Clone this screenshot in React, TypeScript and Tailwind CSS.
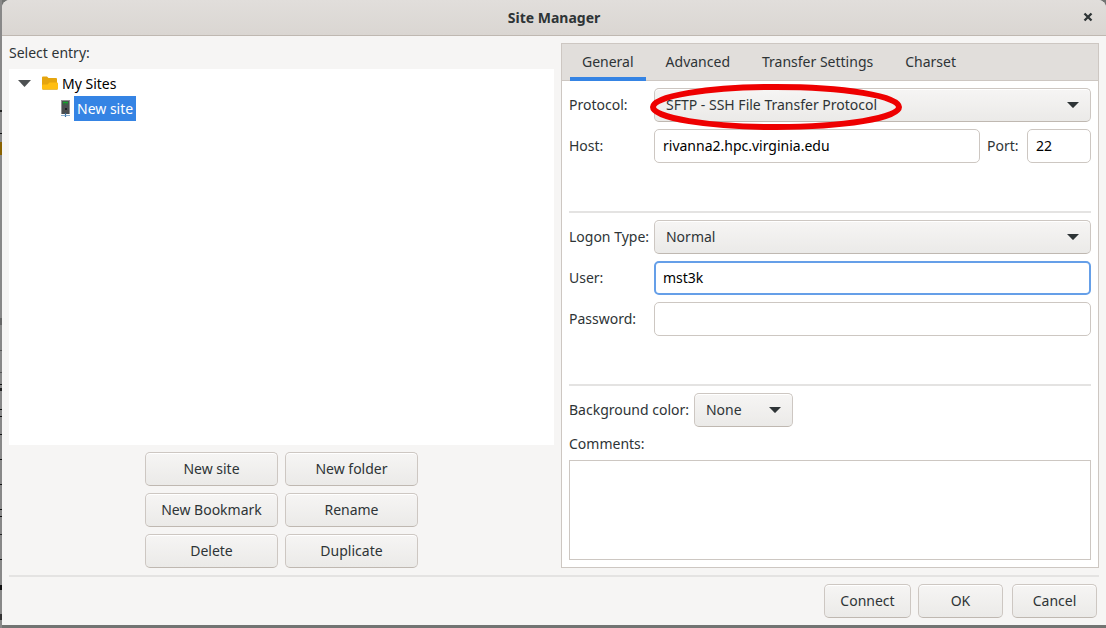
import { useState, type ReactNode } from "react";
import clsx from "clsx";

const raised =
  "h-[34px] rounded-[5px] border border-[#cdc7c2] border-b-[#bfb8b1] bg-linear-to-b from-[#f6f5f4] to-[#ebeae8] text-[#2e3436] shadow-[inset_0_1px_#fff]";
const fieldBase = "h-[34px] w-full min-w-0 rounded-[5px] bg-white pb-[2px] text-black outline-none";
const field = clsx(fieldBase, "border border-[#cdc7c2] px-2");
const focusedField = clsx(fieldBase, "border-2 border-[#659fe8] px-[7px]");
const row = "grid grid-cols-[78px_minmax(0,1fr)] items-center gap-[7px]";

function PushButton({ children, className }: { children: ReactNode; className?: string }) {
  return (
    <button type="button" className={clsx(raised, "whitespace-nowrap", className)}>
      {children}
    </button>
  );
}

function Picker({ id, options, children }: { id: string; options: string[]; children?: ReactNode }) {
  return (
    <div className="relative w-full">
      <select id={id} className={clsx(raised, "w-full appearance-none pr-8 pl-[11px] outline-none")}>
        {options.map((option) => (
          <option key={option}>{option}</option>
        ))}
      </select>
      <svg
        className="pointer-events-none absolute top-[14px] right-3 h-[6px] w-3 fill-[#2e3436]"
        viewBox="0 0 12 6"
        aria-hidden="true"
      >
        <path d="M0 0h12L6.6 5.6Q6 6.2 5.4 5.6Z" />
      </svg>
      {children}
    </div>
  );
}

function Divider({ className }: { className?: string }) {
  return <hr className={clsx("h-[2px] shrink-0 border-0 bg-[#e4e3e2]", className)} />;
}

function FolderIcon() {
  return (
    <svg className="h-[15px] w-4 shrink-0" viewBox="0 0 16 15" aria-hidden="true">
      <path d="M0 1.500q0-1 1-1h4L6.500 2H14q1 0 1 1v9H0z" fill="#e5a50f" />
      <path d="M0 12.500V9.500q0-1 1-1h4.500l2-2H15q1 0 1 1v5q0 1-1 1H1q-1 0-1-1z" fill="#ffbe12" />
      <path d="M.5 13.500h15" stroke="#d9a420" strokeWidth="0.6" />
    </svg>
  );
}

function ServerIcon() {
  return (
    <svg className="h-[17px] w-[10px] shrink-0" viewBox="0 0 10 17" aria-hidden="true">
      <rect x="1" y="0" width="9" height="14" fill="#8f9191" />
      <rect x="2" y="1" width="7" height="13" fill="#4b4e50" />
      <path d="M3 2.500h5" stroke="#16a52c" strokeWidth="1.400" />
      <path d="M3 4h1.500M6 4h1.500" stroke="#178a2a" strokeWidth="1" />
      <rect x="5" y="8" width="2" height="2" fill="#1d2022" />
      <path d="M5.500 13v4" stroke="#3d6f9e" strokeWidth="1.200" />
      <path d="M1 15.500h9" stroke="#6b9cc8" strokeWidth="0.8" />
    </svg>
  );
}

const tabs = ["General", "Advanced", "Transfer Settings", "Charset"];
const actions = ["New site", "New folder", "New Bookmark", "Rename", "Delete", "Duplicate"];
const marks = [
  [110, 2, "#222"], [133, 1, "#111"], [142, 13, "#8a6200"], [318, 7, "#666"], [350, 1, "#555"],
  [372, 1, "#555"], [384, 1, "#111"], [388, 3, "#222"], [409, 1, "#111"], [416, 1, "#111"],
  [434, 1, "#111"], [459, 1, "#111"], [484, 1, "#111"], [509, 1, "#111"], [516, 1, "#111"],
  [534, 1, "#222"], [559, 1, "#111"], [585, 5, "#111"], [614, 6, "#333"],
] as const;

export default function App() {
  const [active, setActive] = useState("General");

  return (
    <div className="relative flex min-h-screen bg-[#727472] pb-[3px] pl-[2px] font-['Noto_Sans',sans-serif] text-[14px] leading-5 text-[#2e3436]">
      <svg className="absolute top-0 left-0 h-full w-[2px]" viewBox="0 0 2 628" preserveAspectRatio="none" aria-hidden="true">
        <rect width="2" height="628" fill="#888" />
        {marks.map(([y, h, fill]) => (
          <rect key={y} y={y} width="2" height={h} fill={fill} />
        ))}
      </svg>

      <main className="flex min-w-0 flex-1 flex-col overflow-hidden rounded-t-[8px] bg-[#f6f5f4]">
        <header className="relative flex h-9 shrink-0 items-center justify-center border-b border-[#bfb8b1] bg-linear-to-b from-[#e1dedb] to-[#dad6d2]">
          <h1 className="font-bold">Site Manager</h1>
          <button type="button" aria-label="Close" className="absolute inset-y-0 right-3 flex items-center">
            <svg className="h-3 w-3" viewBox="0 0 12 12" aria-hidden="true">
              <path d="M2.500 1.500l7 7M9.500 1.500l-7 7" stroke="#2e3436" strokeWidth="2.300" />
            </svg>
          </button>
        </header>

        <div className="flex flex-1 gap-[7px] p-[7px]">
          <section className="flex min-w-0 flex-[546] flex-col">
            <h2>Select entry:</h2>
            <ul className="mt-[6px] flex-1 bg-white pt-[2px] text-black">
              <li>
                <div className="flex h-[25px] items-center pl-[9px]">
                  <svg className="h-[7px] w-[13px] fill-[#4d5052]" viewBox="0 0 13 7" aria-hidden="true">
                    <path d="M0 0h13L6.500 7z" />
                  </svg>
                  <span className="flex items-center gap-1 pl-[11px]">
                    <FolderIcon />
                    My Sites
                  </span>
                </div>
                <ul>
                  <li className="flex h-[25px] items-center gap-1 pl-[51px]">
                    <ServerIcon />
                    <span className="bg-[#3584e4] px-[3px] leading-[25px] text-white">New site</span>
                  </li>
                </ul>
              </li>
            </ul>
            <div className="mt-[7px] grid grid-cols-[133px_133px] justify-center gap-[7px]">
              {actions.map((action) => (
                <PushButton key={action}>{action}</PushButton>
              ))}
            </div>
          </section>

          <section className="flex min-w-0 flex-[537] flex-col border border-[#cdc7c2] bg-white">
            <div role="tablist" className="flex h-[37px] gap-2 border-b border-[#cdc7c2] bg-[#e1dedb] pl-2">
              {tabs.map((tab) => (
                <button
                  key={tab}
                  type="button"
                  role="tab"
                  aria-selected={tab === active}
                  onClick={() => setActive(tab)}
                  className={clsx(
                    "-mb-px h-[37px] border-b-4 px-3 pt-[3px]",
                    tab === active ? "border-[#3584e4]" : "border-transparent",
                  )}
                >
                  {tab}
                </button>
              ))}
            </div>

            <form className="flex flex-1 flex-col p-[7px]" onSubmit={(event) => event.preventDefault()}>
              <div className="flex flex-col gap-[7px]">
                <div className={row}>
                  <label htmlFor="protocol">Protocol:</label>
                  <Picker id="protocol" options={["SFTP - SSH File Transfer Protocol"]}>
                    <svg className="pointer-events-none absolute -top-1 -left-1 h-[46px] w-[252px]" viewBox="0 0 252 46" aria-hidden="true">
                      <ellipse cx="126" cy="23" rx="123" ry="20" fill="none" stroke="#ee0000" strokeWidth="6" />
                    </svg>
                  </Picker>
                </div>
                <div className={row}>
                  <label htmlFor="host">Host:</label>
                  <div className="flex items-center gap-[7px]">
                    <input id="host" className={field} defaultValue="rivanna2.hpc.virginia.edu" />
                    <label htmlFor="port" className="w-[33px] shrink-0">Port:</label>
                    <div className="w-16 shrink-0">
                      <input id="port" className={field} defaultValue="22" />
                    </div>
                  </div>
                </div>
              </div>

              <Divider className="mt-12 mb-[7px]" />

              <div className="flex flex-col gap-[7px]">
                <div className={row}>
                  <label htmlFor="logon" className="whitespace-nowrap">Logon Type:</label>
                  <Picker id="logon" options={["Normal"]} />
                </div>
                <div className={row}>
                  <label htmlFor="user">User:</label>
                  <input id="user" className={focusedField} defaultValue="mst3k" />
                </div>
                <div className={row}>
                  <label htmlFor="password">Password:</label>
                  <input id="password" type="password" className={field} />
                </div>
              </div>

              <Divider className="mt-12 mb-[7px]" />

              <div className="flex items-center gap-[7px]">
                <label htmlFor="color" className="w-[118px] whitespace-nowrap">Background color:</label>
                <div className="w-[99px]">
                  <Picker id="color" options={["None"]} />
                </div>
              </div>
              <label htmlFor="comments" className="mt-[7px]">Comments:</label>
              <textarea id="comments" className="mt-[6px] min-h-[100px] flex-1 resize-none border border-[#cdc7c2] bg-white p-2 text-black outline-none" />
            </form>
          </section>
        </div>

        <footer className="px-[7px] pb-[7px]">
          <Divider className="bg-[#dddcda]" />
          <div className="flex justify-end gap-[7px] pt-[7px] pr-[2px]">
            <PushButton className="w-[87px]">Connect</PushButton>
            <PushButton className="w-[85px]">OK</PushButton>
            <PushButton className="ml-[2px] w-[85px]">Cancel</PushButton>
          </div>
        </footer>
      </main>
    </div>
  );
}
